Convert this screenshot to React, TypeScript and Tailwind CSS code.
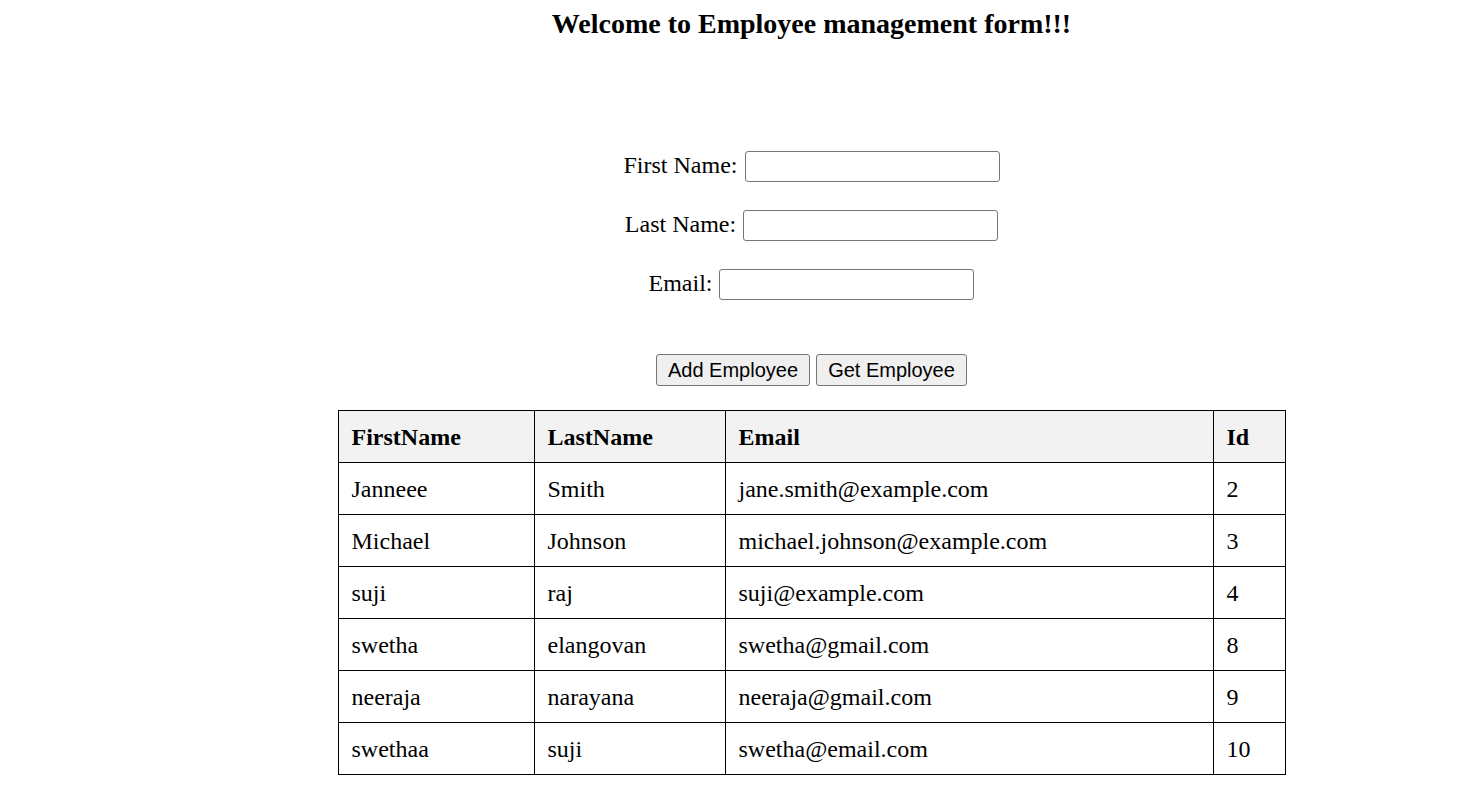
const EMPLEADOS = [
  { first: 'Janneee', last: 'Smith', email: 'jane.smith@example.com', id: 2 },
  { first: 'Michael', last: 'Johnson', email: 'michael.johnson@example.com', id: 3 },
  { first: 'suji', last: 'raj', email: 'suji@example.com', id: 4 },
  { first: 'swetha', last: 'elangovan', email: 'swetha@gmail.com', id: 8 },
  { first: 'neeraja', last: 'narayana', email: 'neeraja@gmail.com', id: 9 },
  { first: 'swethaa', last: 'suji', email: 'swetha@email.com', id: 10 },
]

const CAMPOS = ['First Name:', 'Last Name:', 'Email:']

export default function App() {
  return (
    <div
      className="min-h-[787px] bg-white pl-[156px] text-black text-center"
      style={{ fontFamily: '"Liberation Serif", "Times New Roman", serif' }}
    >
      <h3 className="pt-[8px] text-[28px] leading-[32px] font-bold">Welcome to Employee management form!!!</h3>

      {/* Formulario */}
      <div className="mt-[111px] flex flex-col items-center gap-[28px]">
        {CAMPOS.map(c => (
          <div key={c} className="flex items-center justify-center gap-[7px] h-[31px]">
            <span className="text-[24px] leading-[28px] mb-[4px]">{c}</span>
            <input
              type="text"
              className="w-[255px] h-[31px] border border-[#767676] rounded-[3px] bg-white"
            />
          </div>
        ))}
      </div>

      <div
        className="mt-[54px] flex justify-center gap-[6px]"
        style={{ fontFamily: '"Liberation Sans", Arial, sans-serif' }}
      >
        <button className="h-[32px] w-[154px] border border-[#767676] rounded-[3px] bg-[#efefef] text-[20px] leading-[24px] text-black">
          Add Employee
        </button>
        <button className="h-[32px] w-[151px] border border-[#767676] rounded-[3px] bg-[#efefef] text-[20px] leading-[24px] text-black">
          Get Employee
        </button>
      </div>

      {/* Tabla */}
      <table className="mt-[24px] mx-auto border-collapse text-left text-[24px] leading-[28px]">
        <thead>
          <tr className="bg-[#f2f2f2] h-[52px]">
            <th className="w-[196px] border border-black pl-[13px] font-bold">FirstName</th>
            <th className="w-[191px] border border-black pl-[13px] font-bold">LastName</th>
            <th className="w-[488px] border border-black pl-[13px] font-bold">Email</th>
            <th className="w-[72px] border border-black pl-[13px] font-bold">Id</th>
          </tr>
        </thead>
        <tbody>
          {EMPLEADOS.map(e => (
            <tr key={e.id} className="h-[52px]">
              <td className="border border-black pl-[13px]">{e.first}</td>
              <td className="border border-black pl-[13px]">{e.last}</td>
              <td className="border border-black pl-[13px]">{e.email}</td>
              <td className="border border-black pl-[13px]">{e.id}</td>
            </tr>
          ))}
        </tbody>
      </table>
    </div>
  )
}
